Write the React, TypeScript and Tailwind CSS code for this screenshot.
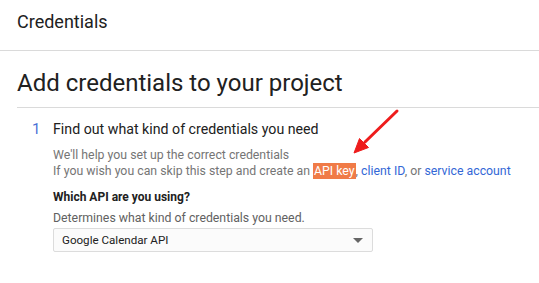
export default function App() {
  return (
    <div className="relative w-[539px] h-[283px] overflow-hidden bg-white font-['Roboto',sans-serif] text-[#212121]">
      {/* top bar */}
      <header className="h-[51px] border-b border-[#dadada] pl-[17px] pt-[10px] text-[18px] leading-[24px]">
        Credentials
      </header>

      <div className="pl-[17px]">
        <h1 className="mt-[16px] border-b border-[#dadada] pb-[8px] text-[24px] leading-[32px]">
          Add credentials to your project
        </h1>

        {/* step 1 */}
        <div className="mt-[11px] flex">
          <span className="w-[36px] pl-[15px] text-[15px] leading-[20px] text-[#4a72d6]">1</span>
          <div className="flex-1">
            <h2 className="text-[14.2px] leading-[20px]">Find out what kind of credentials you need</h2>
            <p className="mt-[8px] text-[12.3px] leading-[16px] text-[#757575]">
              We'll help you set up the correct credentials
              <br />
              If you wish you can skip this step and create an{" "}
              <span className="inline-block bg-[#f07b47] px-[1px] leading-[16px] text-white">API key</span>
              , <span className="text-[#3367d6]">client ID</span>, or{" "}
              <span className="text-[#3367d6]">service account</span>
            </p>

            <h3 className="mt-[10px] text-[12px] font-bold leading-[16px]">Which API are you using?</h3>
            <p className="mt-[5px] text-[12.3px] leading-[16px] text-[#616161]">
              Determines what kind of credentials you need.
            </p>

            <div className="mt-[2px] flex h-[24px] w-[320px] items-center justify-between rounded-[2px] border border-[#dcdcdc] bg-[#fbfbfb] pl-[8px] pr-[9px]">
              <span className="text-[11.6px] leading-[16px]">Google Calendar API</span>
              <svg width="10" height="5" viewBox="0 0 10 5">
                <path d="M0 0 L10 0 L5 5 Z" fill="#666" />
              </svg>
            </div>
          </div>
        </div>
      </div>

      {/* annotation arrow */}
      <svg className="absolute left-[340px] top-[100px]" width="70" height="60" viewBox="0 0 70 60">
        <line x1="57" y1="11" x2="25" y2="42" stroke="#ee1c1c" strokeWidth="3" strokeLinecap="round" />
        <path d="M14 53 L28.5 47.5 L19.5 38.5 Z" fill="#ee1c1c" stroke="#ee1c1c" strokeWidth="1" strokeLinejoin="round" />
      </svg>
    </div>
  );
}
